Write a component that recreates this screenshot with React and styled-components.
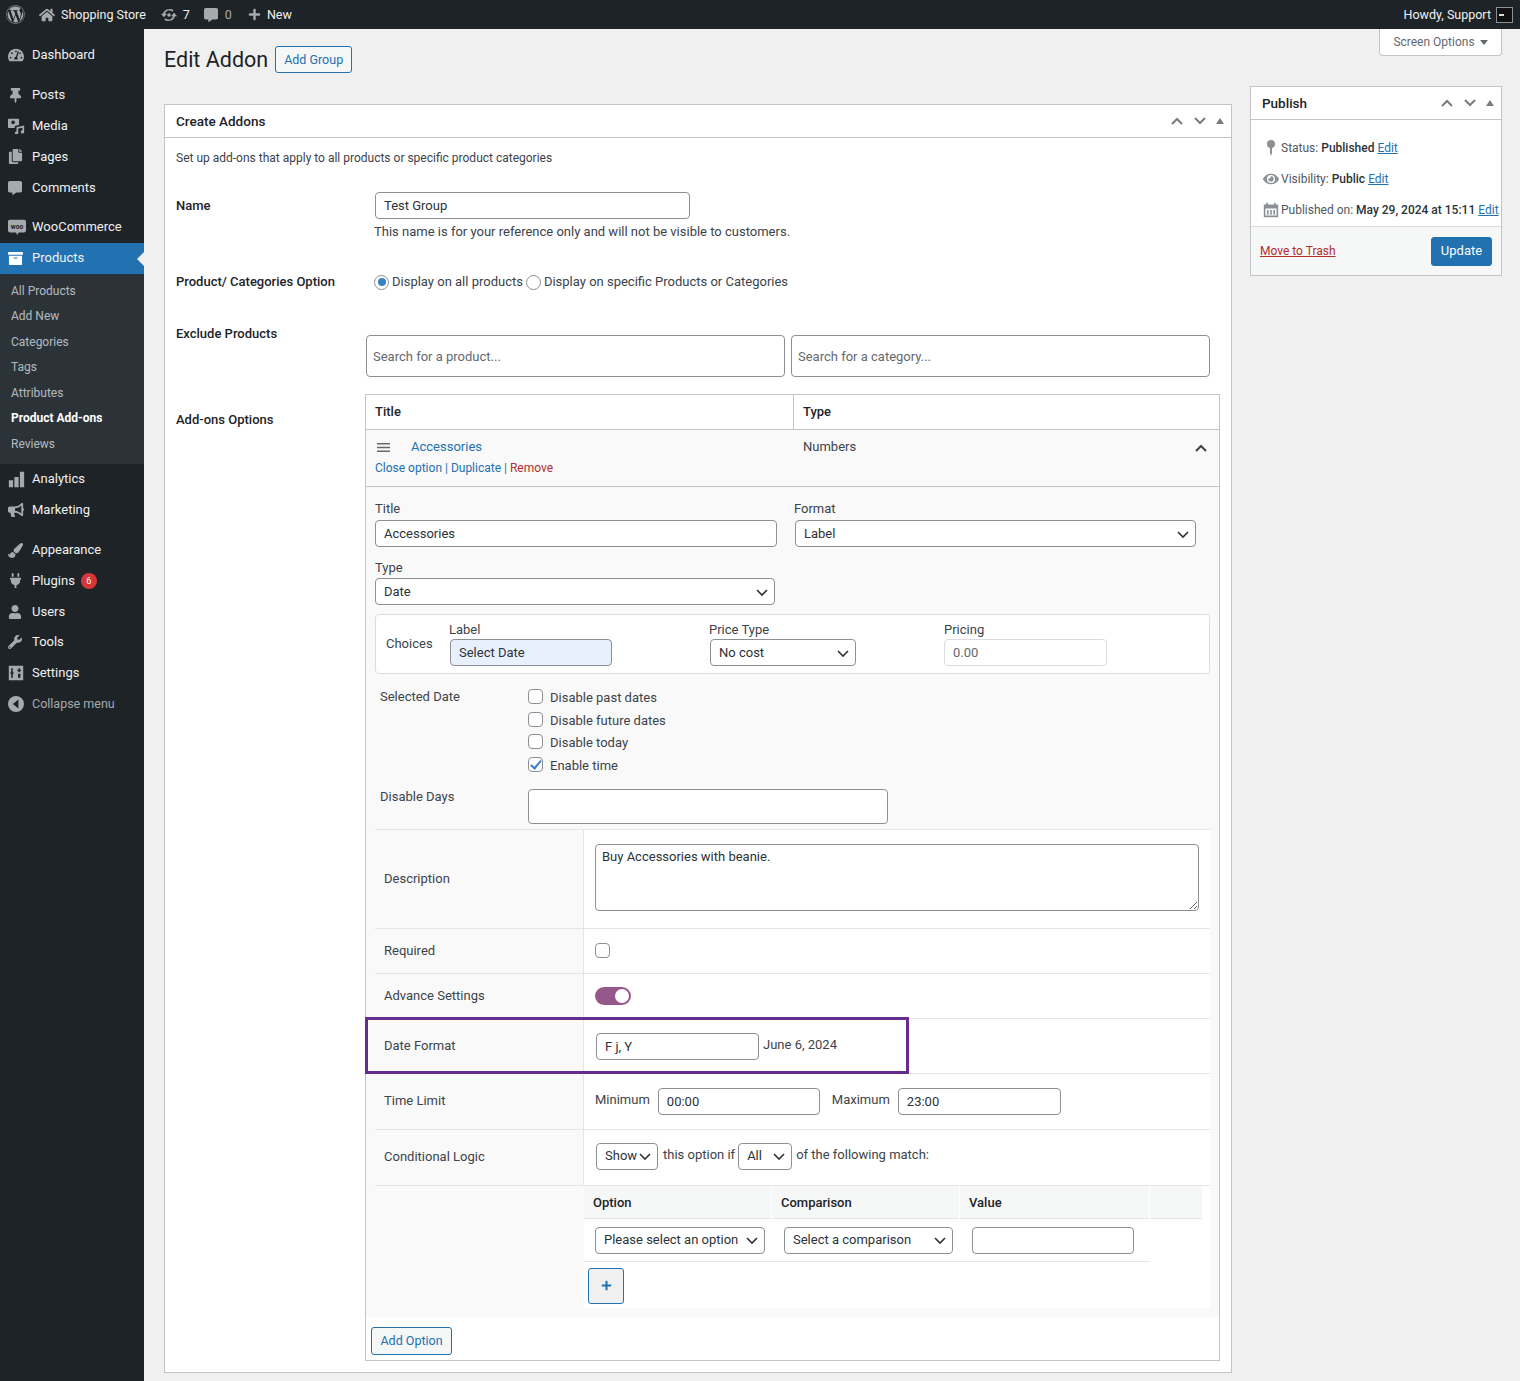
import React from 'react';
import styled, { createGlobalStyle } from 'styled-components';
import {
  FaWordpress, FaHome, FaCommentAlt, FaPlus, FaTachometerAlt, FaThumbtack, FaCopy,
  FaArchive, FaBullhorn, FaPaintBrush, FaPlug, FaUser, FaWrench, FaEye,
} from 'react-icons/fa';

const chevron =
  "url(\"data:image/svg+xml,%3Csvg xmlns='http://www.w3.org/2000/svg' width='20' height='20' viewBox='0 0 20 20'%3E%3Cpath d='M5 8l5 5 5-5' fill='none' stroke='%232c3338' stroke-width='1.6'/%3E%3C/svg%3E\")";

const Global = createGlobalStyle`
  html, body { margin: 0; padding: 0; background: #f0f0f1; }
  body { font-family: Roboto, "Noto Sans", Arial, sans-serif; font-size: 13px; line-height: 20px; color: #3c434a; }
  * { box-sizing: border-box; }
`;

const Page = styled.div`
  width: 1520px;
  height: 1381px;
  overflow: hidden;
  display: grid;
  grid-template-columns: 144px 1fr;
  grid-template-rows: 29px 1fr;
`;

const TopBar = styled.header`
  grid-column: 1 / 3;
  background: #1d2327;
  color: #f0f0f1;
  display: flex;
  align-items: center;
  padding: 0 7px 0 6px;
  height: 29px;
`;

const BarItem = styled.span`
  display: inline-flex;
  align-items: center;
  gap: ${p => p.$gap || 5}px;
  margin-right: ${p => p.$mr || 0}px;
  font-size: 12.5px;
  color: ${p => (p.$dim ? '#a7aaad' : '#f0f0f1')};
  svg { color: #a7aaad; fill: currentColor; flex: none; }
`;

const BarRight = styled.div`
  margin-left: auto;
  display: flex;
  align-items: center;
  gap: 5px;
  font-size: 12.5px;
`;

const Avatar = styled.span`
  width: 17px;
  height: 16px;
  background: #111;
  border: 1px solid #8c8f94;
  display: flex;
  align-items: center;
  justify-content: flex-start;
  padding-left: 2px;
  &::after { content: ''; width: 5px; height: 2px; background: #ddd; }
`;

const Sidebar = styled.nav`
  background: #1d2327;
  padding-top: 11px;
`;

const MenuItem = styled.div`
  height: 30.8px;
  margin-top: ${p => (p.$sep ? 9 : 0)}px;
  display: flex;
  align-items: center;
  font-size: 13px;
  position: relative;
  background: ${p => (p.$active ? '#2271b1' : 'transparent')};
  color: ${p => (p.$muted ? '#a7aaad' : '#f0f0f1')};
  font-size: ${p => (p.$muted ? 12.5 : 13)}px;
  &::after {
    content: ${p => (p.$active ? "''" : 'none')};
    position: absolute;
    right: 0;
    top: 9px;
    border: 7px solid transparent;
    border-right-color: #f0f0f1;
    border-left: 0;
  }
`;

const MenuIcon = styled.span`
  width: 32px;
  padding-left: 8px;
  display: flex;
  align-items: center;
  color: ${p => (p.$active ? '#fff' : '#a7aaad')};
  svg { fill: currentColor; }
`;

const Badge = styled.span`
  width: 16px;
  height: 16px;
  margin-left: 6px;
  border-radius: 50%;
  background: #d63638;
  color: #fff;
  font-size: 9px;
  line-height: 16px;
  text-align: center;
`;

const SubMenu = styled.div`
  background: #2c3338;
  padding: 5px 0 7px;
`;

const SubItem = styled.div`
  height: 25.5px;
  line-height: 25.5px;
  padding-left: 11px;
  font-size: 12px;
  color: ${p => (p.$current ? '#fff' : 'rgba(240,246,252,.7)')};
  font-weight: ${p => (p.$current ? 700 : 400)};
`;

const Main = styled.main`
  padding: 0 18px 0 20px;
  display: grid;
  grid-template-columns: 1068px 252px;
  column-gap: 18px;
  align-items: start;
`;

const Primary = styled.div`
  padding-top: 17px;
`;

const TitleRow = styled.div`
  display: flex;
  align-items: center;
  gap: 7px;
  height: 27px;
  margin-bottom: 31px;
`;

const Heading = styled.h1`
  margin: 0;
  font-size: 21.5px;
  font-weight: 400;
  color: #1d2327;
`;

const Button = styled.button`
  font: inherit;
  font-size: 12.5px;
  color: #2271b1;
  background: #f6f7f7;
  border: 1px solid #2271b1;
  border-radius: 3px;
  width: ${p => p.$w}px;
  height: ${p => p.$h}px;
  padding: 0;
`;

const PlusButton = styled(Button)`
  background: #f0f0f1;
  margin: 6px 0 4px 4px;
  display: flex;
  align-items: center;
  justify-content: center;
  svg { fill: currentColor; }
`;

const Panel = styled.section`
  background: #fff;
  border: 1px solid #c3c4c7;
`;

const PanelHead = styled.div`
  height: ${p => p.$h}px;
  border-bottom: 1px solid #c3c4c7;
  padding: 0 7px 0 11px;
  display: flex;
  align-items: center;
  justify-content: space-between;
  font-size: 13.5px;
  font-weight: 500;
  color: #1d2327;
`;

const HeadControls = styled.div`
  display: flex;
  align-items: center;
  gap: 9px;
  color: #787c82;
  svg { display: block; }
`;

const PanelBody = styled.div`
  padding: 10px 11px 11px;
`;

const Intro = styled.p`
  margin: 0 0 24px;
  font-size: 12px;
`;

const FormRow = styled.div`
  display: grid;
  grid-template-columns: 190px 1fr;
  margin-top: ${p => p.$mt || 0}px;
`;

const RowLabel = styled.div`
  font-weight: 500;
  color: #1d2327;
  font-size: 13px;
  line-height: ${p => p.$lh || 20}px;
  padding-top: ${p => p.$pt || 0}px;
`;

const Indented = styled.div`
  padding-left: ${p => p.$pl}px;
`;

const Help = styled.div`
  margin-top: 3px;
  margin-left: -1px;
`;

const RadioGroup = styled.div`
  display: flex;
  align-items: center;
  margin-left: -1px;
  height: 20px;
`;

const Radio = styled.input.attrs({ type: 'radio', name: 'scope' })`
  appearance: none;
  width: 15px;
  height: 15px;
  margin: 0 3px 0 ${p => p.$ml || 0}px;
  border: 1px solid #8c8f94;
  border-radius: 50%;
  background: #fff;
  display: grid;
  place-items: center;
  &:checked::before {
    content: '';
    width: 8px;
    height: 8px;
    border-radius: 50%;
    background: #3582c4;
  }
`;

const Input = styled.input`
  display: block;
  font: inherit;
  color: #2c3338;
  width: ${p => p.$w}px;
  height: ${p => p.$h || 27}px;
  margin-left: ${p => p.$ml || 0}px;
  padding: 0 ${p => p.$pad || 8}px;
  background: ${p => p.$bg || '#fff'};
  border: 1px solid ${p => (p.disabled ? '#dcdcde' : '#8c8f94')};
  border-radius: 4px;
  &::placeholder { color: #646970; opacity: 1; }
  &:disabled { color: #a7aaad; opacity: 1; }
`;

const Select = styled.select`
  display: block;
  appearance: none;
  font: inherit;
  color: #2c3338;
  width: ${p => p.$w}px;
  height: 27px;
  margin-left: ${p => p.$ml || 0}px;
  padding: 0 0 0 8px;
  background: #fff ${chevron} no-repeat right 2px center / 20px;
  border: 1px solid #8c8f94;
  border-radius: 4px;
`;

const SearchPair = styled.div`
  display: flex;
  gap: 6px;
  margin-top: 11px;
`;

const OptionsTable = styled.div`
  border: 1px solid #c3c4c7;
  margin-left: -1px;
  width: 855px;
  background: #fff;
`;

const TableHead = styled.div`
  display: grid;
  grid-template-columns: 427px 1fr;
  height: 35px;
  border-bottom: 1px solid #c3c4c7;
  font-weight: 500;
  color: #1d2327;
  font-size: 13px;
`;

const HeadCell = styled.div`
  padding-left: 9px;
  line-height: 34px;
  border-left: ${p => (p.$line ? '1px solid #c3c4c7' : 0)};
`;

const Summary = styled.div`
  display: grid;
  grid-template-columns: 427px 1fr auto;
  height: 57px;
  padding-top: 7px;
  background: #f9f9f9;
  border-bottom: 1px solid #c3c4c7;
`;

const SummaryTitle = styled.div`
  padding-left: 11px;
  display: flex;
  align-items: center;
  gap: 21px;
  height: 20px;
  color: #2271b1;
  svg { color: #646970; display: block; }
`;

const ActionLinks = styled.div`
  padding-left: 9px;
  margin-top: 1px;
  font-size: 12px;
  color: #2271b1;
`;

const Danger = styled.span`
  color: #b32d2e;
`;

const TypeCell = styled.div`
  padding-left: 10px;
`;

const Toggle = styled.div`
  padding-right: 11px;
  padding-top: 4px;
  color: #3c434a;
`;

const OptionBody = styled.div`
  background: #f9f9f9;
  padding: 12px 9px 9px;
`;

const TwoFields = styled.div`
  display: flex;
  gap: 17px;
`;

const FieldLabel = styled.div`
  height: ${p => p.$h || 21}px;
  line-height: 20px;
  margin-top: ${p => p.$mt || 0}px;
`;

const ChoicesBox = styled.div`
  margin-top: 9px;
  height: 60px;
  display: grid;
  grid-template-columns: 63px 260px 235px 1fr;
  padding-left: 10px;
  align-items: start;
  background: #fff;
  border: 1px solid #dcdcde;
  border-radius: 4px;
`;

const ChoicesTitle = styled.div`
  line-height: 58px;
`;

const ChoiceCol = styled.div`
  padding-top: 5px;
`;

const DateSection = styled.div`
  margin-top: 15px;
  display: grid;
  grid-template-columns: 148px 1fr;
  padding-left: 5px;
`;

const SideLabel = styled.div`
  line-height: 15px;
`;

const CheckRow = styled.label`
  display: flex;
  align-items: flex-start;
  gap: 7px;
  height: 22.67px;
  line-height: 18px;
`;

const Checkbox = styled.input.attrs({ type: 'checkbox' })`
  appearance: none;
  flex: none;
  width: 15px;
  height: 15px;
  margin: 0;
  background: #fff;
  border: 1px solid #8c8f94;
  border-radius: 4px;
  position: relative;
  &:checked::before {
    content: '';
    position: absolute;
    left: 4px;
    top: 0;
    width: 4px;
    height: 9px;
    border: solid #3582c4;
    border-width: 0 2px 2px 0;
    transform: rotate(40deg);
  }
`;

const DaysRow = styled(DateSection)`
  margin-top: 9px;
`;

const SettingsTable = styled.div`
  margin-top: 5px;
  border-top: 1px solid #e5e5e5;
`;

const SettingRow = styled.div`
  display: grid;
  grid-template-columns: 209px 1fr;
  height: ${p => p.$h}px;
  border-bottom: 1px solid #e5e5e5;
  position: relative;
`;

const SettingName = styled.div`
  background: #f9f9f9;
  border-right: 1px solid #e5e5e5;
  padding-left: 9px;
  display: flex;
  align-items: center;
`;

const SettingValue = styled.div`
  background: #fff;
  padding: ${p => (p.$pt !== undefined ? `${p.$pt}px` : 0)} 0 0 11px;
  display: flex;
  align-items: ${p => (p.$pt !== undefined ? 'flex-start' : 'center')};
  gap: ${p => p.$gap || 0}px;
`;

const Textarea = styled.textarea`
  display: block;
  font: inherit;
  color: #2c3338;
  width: 604px;
  height: 67px;
  padding: 2px 6px;
  border: 1px solid #8c8f94;
  border-radius: 4px;
  background: #fff;
`;

const Switch = styled.div`
  width: 36px;
  height: 18px;
  border-radius: 9px;
  background: #96588a;
  position: relative;
  &::after {
    content: '';
    position: absolute;
    right: 2px;
    top: 2px;
    width: 14px;
    height: 14px;
    border-radius: 50%;
    background: #fff;
  }
`;

const Highlight = styled.div`
  position: absolute;
  left: -10px;
  top: -2px;
  width: 544px;
  height: 57px;
  border: 3px solid #662d91;
  pointer-events: none;
`;

const InlineText = styled.span`
  line-height: ${p => p.$lh || 24}px;
  margin: 0 ${p => p.$mr || 0}px 0 ${p => p.$ml || 0}px;
`;

const LogicRow = styled.div`
  display: grid;
  grid-template-columns: 209px 1fr;
`;

const LogicBlank = styled.div`
  background: #f9f9f9;
`;

const LogicWrap = styled.div`
  background: #fff;
`;

const LogicHead = styled.div`
  display: grid;
  grid-template-columns: 188px 188px 190px 53px;
  width: 619px;
  height: 33px;
  background: #f6f7f7;
  border-bottom: 1px solid #e5e5e5;
  font-weight: 500;
  color: #1d2327;
`;

const LogicHeadCell = styled.div`
  padding-left: 9px;
  line-height: 33px;
  border-right: 1px solid #fff;
`;

const LogicBody = styled.div`
  display: grid;
  grid-template-columns: 188px 188px 190px;
  width: 566px;
  height: 43px;
  padding-top: 8px;
  border-bottom: 1px solid #e5e5e5;
`;

const AddRow = styled.div`
  padding: 10px 0 5px 5px;
`;

const Side = styled.aside`
  display: flex;
  flex-direction: column;
  align-items: flex-end;
`;

const ScreenOptions = styled.div`
  width: 123px;
  height: 27px;
  background: #fff;
  border: 1px solid #c3c4c7;
  border-top: 0;
  border-radius: 0 0 4px 4px;
  display: flex;
  align-items: center;
  justify-content: center;
  gap: 5px;
  font-size: 12px;
  color: #646970;
  margin-bottom: 30px;
  &::after {
    content: '';
    border: 4px solid transparent;
    border-top: 5px solid #646970;
    border-bottom: 0;
  }
`;

const PublishBox = styled(Panel)`
  width: 252px;
`;

const PublishInfo = styled.div`
  padding: 12px 0 1px;
`;

const InfoRow = styled.div`
  height: 31px;
  padding-left: 9px;
  display: flex;
  align-items: center;
  font-size: 12px;
  white-space: nowrap;
  color: #50575e;
  b { font-weight: 500; color: #2c3338; margin-left: 3px; }
  a { color: #2271b1; text-decoration: underline; margin-left: 3px; }
  svg { color: #8c8f94; fill: currentColor; flex: none; }
`;

const InfoIcon = styled.span`
  width: 23px;
  display: flex;
  justify-content: center;
  margin-right: -1px;
  margin-left: -1px;
`;

const PublishFoot = styled.div`
  height: 49px;
  border-top: 1px solid #dcdcde;
  background: #f6f7f7;
  padding: 0 9px;
  display: flex;
  align-items: center;
  justify-content: space-between;
`;

const TrashLink = styled.a`
  color: #b32d2e;
  text-decoration: underline;
  font-size: 12px;
`;

const UpdateButton = styled.button`
  font: inherit;
  width: 61px;
  height: 29px;
  color: #fff;
  background: #2271b1;
  border: 1px solid #2271b1;
  border-radius: 3px;
  padding: 0;
`;

const UpdateIcon = () => (
  <svg width="18" height="18" viewBox="0 0 20 20">
    <path d="M10 3.5a6.8 6.8 0 0 0-6.6 5H1l3.4 4 3.4-4H5.6a4.8 4.8 0 0 1 8-2.2l1.5-1.5A6.8 6.8 0 0 0 10 3.5z" />
    <path d="M10 16.5a6.8 6.8 0 0 0 6.6-5H19l-3.4-4-3.4 4h2.2a4.8 4.8 0 0 1-8 2.2l-1.5 1.5a6.8 6.8 0 0 0 5.1 1.3z" />
    <circle cx="10" cy="10" r="2" />
  </svg>
);

const MediaIcon = () => (
  <svg width="17" height="17" viewBox="0 0 20 20">
    <path d="M1 2h11a1 1 0 0 1 1 1v6.5l-5 1V13H1a1 1 0 0 1-1-1V3a1 1 0 0 1 1-1zm5 2a2.2 2.2 0 1 0 0 4.400a2.200 2.200 0 0 0 0-4.400z" />
    <path d="M10 12l9-2v7.500a2 2 0 1 1-2-2V12.500l-5 1V19a2 2 0 1 1-2-2z" />
  </svg>
);

const WooIcon = () => (
  <svg width="18" height="18" viewBox="0 0 20 20">
    <path d="M2 2h16a2 2 0 0 1 2 2v10a2 2 0 0 1-2 2h-6l-2 3-1-3H2a2 2 0 0 1-2-2V4a2 2 0 0 1 2-2z" />
    <text x="10" y="12" textAnchor="middle" fontSize="7.500" fontWeight="700" fill="#1d2327" fontFamily="Roboto">woo</text>
  </svg>
);

const BarsIcon = () => (
  <svg width="17" height="17" viewBox="0 0 20 20">
    <path d="M1 11h5v8H1zM7.500 7h5v12h-5zM14 1h5v18h-5z" />
  </svg>
);

const SlidersIcon = () => (
  <svg width="16" height="16" viewBox="0 0 20 20">
    <path fillRule="evenodd" d="M1 1h18v18H1zM4 4v5H3v2h1v5h2v-5h1V9H6V4zm9 0v2h-2l3 3.500L17 6h-2V4zm-.5 7v5h3v-5z" />
  </svg>
);

const CollapseIcon = () => (
  <svg width="16" height="16" viewBox="0 0 20 20">
    <path fillRule="evenodd" d="M10 0a10 10 0 1 1 0 20 10 10 0 0 1 0-20zm3 4.500L6 10l7 5.500z" />
  </svg>
);

const Chevron = ({ up, size = 14 }) => (
  <svg width={size} height={size} viewBox="0 0 14 14" fill="none" stroke="currentColor" strokeWidth="2">
    <path d={up ? 'M2 10l5-5 5 5' : 'M2 4l5 5 5-5'} />
  </svg>
);

const Caret = () => (
  <svg width="8" height="6" viewBox="0 0 8 6" fill="currentColor">
    <path d="M4 0l4 6H0z" />
  </svg>
);

const PinIcon = () => (
  <svg width="10" height="16" viewBox="0 0 10 16">
    <circle cx="5" cy="4" r="4" />
    <path d="M4 7h2v6l-1 3-1-3z" />
  </svg>
);

const CalendarIcon = () => (
  <svg width="16" height="16" viewBox="0 0 20 20">
    <path fillRule="evenodd" d="M1 3h3V1h2v2h8V1h2v2h3v16H1zm2 5v9h14V8zm2 2h2v6H5zm4 0h2v6H9zm4 0h2v6h-2z" />
  </svg>
);

const GripIcon = () => (
  <svg width="13" height="9" viewBox="0 0 13 9" fill="currentColor">
    <path d="M0 0h13v1.500H0zM0 3.700h13v1.500H0zM0 7.500h13V9H0z" />
  </svg>
);

const menuTop = [
  { icon: <FaTachometerAlt size={16} />, label: 'Dashboard' },
  { icon: <FaThumbtack size={15} />, label: 'Posts', sep: true },
  { icon: <MediaIcon />, label: 'Media' },
  { icon: <FaCopy size={15} />, label: 'Pages' },
  { icon: <FaCommentAlt size={14} />, label: 'Comments' },
  { icon: <WooIcon />, label: 'WooCommerce', sep: true },
  { icon: <FaArchive size={15} />, label: 'Products', active: true },
];

const subItems = ['All Products', 'Add New', 'Categories', 'Tags', 'Attributes', 'Product Add-ons', 'Reviews'];

const menuBottom = [
  { icon: <BarsIcon />, label: 'Analytics' },
  { icon: <FaBullhorn size={16} />, label: 'Marketing' },
  { icon: <FaPaintBrush size={15} />, label: 'Appearance', sep: true },
  { icon: <FaPlug size={15} />, label: 'Plugins', badge: 6 },
  { icon: <FaUser size={14} />, label: 'Users' },
  { icon: <FaWrench size={14} />, label: 'Tools' },
  { icon: <SlidersIcon />, label: 'Settings' },
  { icon: <CollapseIcon />, label: 'Collapse menu', muted: true },
];

const Item = ({ item }) => (
  <MenuItem $sep={item.sep} $active={item.active} $muted={item.muted}>
    <MenuIcon $active={item.active}>{item.icon}</MenuIcon>
    {item.label}
    {item.badge && <Badge>{item.badge}</Badge>}
  </MenuItem>
);

const dateChecks = [
  ['Disable past dates', false],
  ['Disable future dates', false],
  ['Disable today', false],
  ['Enable time', true],
];

export default function App() {
  return (
    <Page>
      <Global />
      <TopBar>
        <BarItem $mr={14}><FaWordpress size={19} /></BarItem>
        <BarItem $mr={14} $gap={6}><FaHome size={16} />Shopping Store</BarItem>
        <BarItem $mr={14} $gap={5}><UpdateIcon />7</BarItem>
        <BarItem $mr={16} $gap={7} $dim><FaCommentAlt size={14} />0</BarItem>
        <BarItem $gap={6}><FaPlus size={13} />New</BarItem>
        <BarRight>Howdy, Support<Avatar /></BarRight>
      </TopBar>

      <Sidebar>
        {menuTop.map(item => <Item key={item.label} item={item} />)}
        <SubMenu>
          {subItems.map(label => (
            <SubItem key={label} $current={label === 'Product Add-ons'}>{label}</SubItem>
          ))}
        </SubMenu>
        {menuBottom.map(item => <Item key={item.label} item={item} />)}
      </Sidebar>

      <Main>
        <Primary>
          <TitleRow>
            <Heading>Edit Addon</Heading>
            <Button $w={77} $h={27}>Add Group</Button>
          </TitleRow>
          <Panel>
            <PanelHead $h={33}>
              Create Addons
              <HeadControls>
                <Chevron up />
                <Chevron />
                <Caret />
              </HeadControls>
            </PanelHead>
            <PanelBody>
              <Intro>Set up add-ons that apply to all products or specific product categories</Intro>

              <FormRow>
                <RowLabel $lh={27}>Name</RowLabel>
                <Indented $pl={9}>
                  <Input $w={315} defaultValue="Test Group" />
                  <Help>This name is for your reference only and will not be visible to customers.</Help>
                </Indented>
              </FormRow>

              <FormRow $mt={30}>
                <RowLabel>Product/ Categories Option</RowLabel>
                <Indented $pl={9}>
                  <RadioGroup>
                    <Radio defaultChecked />Display on all products
                    <Radio $ml={3} />Display on specific Products or Categories
                  </RadioGroup>
                </Indented>
              </FormRow>

              <FormRow $mt={32}>
                <RowLabel>Exclude Products</RowLabel>
                <SearchPair>
                  <Input $w={419} $h={42} $pad={6} placeholder="Search for a product..." />
                  <Input $w={419} $h={42} $pad={6} placeholder="Search for a category..." />
                </SearchPair>
              </FormRow>

              <FormRow $mt={17}>
                <RowLabel $pt={16}>Add-ons Options</RowLabel>
                <OptionsTable>
                  <TableHead>
                    <HeadCell>Title</HeadCell>
                    <HeadCell $line>Type</HeadCell>
                  </TableHead>
                  <Summary>
                    <div>
                      <SummaryTitle><GripIcon />Accessories</SummaryTitle>
                      <ActionLinks>Close option | Duplicate | <Danger>Remove</Danger></ActionLinks>
                    </div>
                    <TypeCell>Numbers</TypeCell>
                    <Toggle><Chevron up size={14} /></Toggle>
                  </Summary>
                  <OptionBody>
                    <TwoFields>
                      <div>
                        <FieldLabel>Title</FieldLabel>
                        <Input $w={402} defaultValue="Accessories" />
                      </div>
                      <div>
                        <FieldLabel>Format</FieldLabel>
                        <Select $w={401} $ml={1}><option>Label</option></Select>
                      </div>
                    </TwoFields>
                    <FieldLabel $mt={11} $h={20}>Type</FieldLabel>
                    <Select $w={400}><option>Date</option></Select>

                    <ChoicesBox>
                      <ChoicesTitle>Choices</ChoicesTitle>
                      <ChoiceCol>
                        <FieldLabel $h={19}>Label</FieldLabel>
                        <Input $w={162} $ml={1} $bg="#e8f0fe" defaultValue="Select Date" />
                      </ChoiceCol>
                      <ChoiceCol>
                        <FieldLabel $h={19}>Price Type</FieldLabel>
                        <Select $w={146} $ml={1}><option>No cost</option></Select>
                      </ChoiceCol>
                      <ChoiceCol>
                        <FieldLabel $h={19}>Pricing</FieldLabel>
                        <Input $w={163} disabled placeholder="0.00" />
                      </ChoiceCol>
                    </ChoicesBox>

                    <DateSection>
                      <SideLabel>Selected Date</SideLabel>
                      <div>
                        {dateChecks.map(([label, checked]) => (
                          <CheckRow key={label}>
                            <Checkbox defaultChecked={checked} />{label}
                          </CheckRow>
                        ))}
                      </div>
                    </DateSection>
                    <DaysRow>
                      <SideLabel>Disable Days</SideLabel>
                      <Input $w={360} $h={35} />
                    </DaysRow>

                    <SettingsTable>
                      <SettingRow $h={99}>
                        <SettingName>Description</SettingName>
                        <SettingValue $pt={14}>
                          <Textarea defaultValue="Buy Accessories with beanie." />
                        </SettingValue>
                      </SettingRow>
                      <SettingRow $h={45}>
                        <SettingName>Required</SettingName>
                        <SettingValue><Checkbox /></SettingValue>
                      </SettingRow>
                      <SettingRow $h={45}>
                        <SettingName>Advance Settings</SettingName>
                        <SettingValue><Switch /></SettingValue>
                      </SettingRow>
                      <SettingRow $h={55}>
                        <SettingName>Date Format</SettingName>
                        <SettingValue $pt={14}>
                          <Input $w={163} $ml={1} defaultValue="F j, Y" />
                          <InlineText $ml={4}>June 6, 2024</InlineText>
                        </SettingValue>
                        <Highlight />
                      </SettingRow>
                      <SettingRow $h={56}>
                        <SettingName>Time Limit</SettingName>
                        <SettingValue $pt={14}>
                          <InlineText $mr={8}>Minimum</InlineText>
                          <Input $w={162} defaultValue="00:00" />
                          <InlineText $ml={12} $mr={8}>Maximum</InlineText>
                          <Input $w={163} defaultValue="23:00" />
                        </SettingValue>
                      </SettingRow>
                      <SettingRow $h={56}>
                        <SettingName>Conditional Logic</SettingName>
                        <SettingValue $pt={13}>
                          <Select $w={62} $ml={1}><option>Show</option></Select>
                          <InlineText $ml={5} $mr={3}>this option if</InlineText>
                          <Select $w={54}><option>All</option></Select>
                          <InlineText $ml={4}>of the following match:</InlineText>
                        </SettingValue>
                      </SettingRow>
                      <LogicRow>
                        <LogicBlank />
                        <LogicWrap>
                          <LogicHead>
                            <LogicHeadCell>Option</LogicHeadCell>
                            <LogicHeadCell>Comparison</LogicHeadCell>
                            <LogicHeadCell>Value</LogicHeadCell>
                            <LogicHeadCell />
                          </LogicHead>
                          <LogicBody>
                            <Select $w={170} $ml={11}><option>Please select an option</option></Select>
                            <Select $w={169} $ml={12}><option>Select a comparison</option></Select>
                            <Input $w={162} $ml={12} />
                          </LogicBody>
                          <PlusButton $w={36} $h={36}><FaPlus size={11} /></PlusButton>
                        </LogicWrap>
                      </LogicRow>
                    </SettingsTable>
                  </OptionBody>
                  <AddRow>
                    <Button $w={81} $h={28}>Add Option</Button>
                  </AddRow>
                </OptionsTable>
              </FormRow>
            </PanelBody>
          </Panel>
        </Primary>

        <Side>
          <ScreenOptions>Screen Options</ScreenOptions>
          <PublishBox>
            <PanelHead $h={33}>
              Publish
              <HeadControls>
                <Chevron up />
                <Chevron />
                <Caret />
              </HeadControls>
            </PanelHead>
            <PublishInfo>
              <InfoRow><InfoIcon><PinIcon /></InfoIcon>Status:<b>Published</b><a>Edit</a></InfoRow>
              <InfoRow><InfoIcon><FaEye size={16} /></InfoIcon>Visibility:<b>Public</b><a>Edit</a></InfoRow>
              <InfoRow><InfoIcon><CalendarIcon /></InfoIcon>Published on:<b>May 29, 2024 at 15:11</b><a>Edit</a></InfoRow>
            </PublishInfo>
            <PublishFoot>
              <TrashLink>Move to Trash</TrashLink>
              <UpdateButton>Update</UpdateButton>
            </PublishFoot>
          </PublishBox>
        </Side>
      </Main>
    </Page>
  );
}
